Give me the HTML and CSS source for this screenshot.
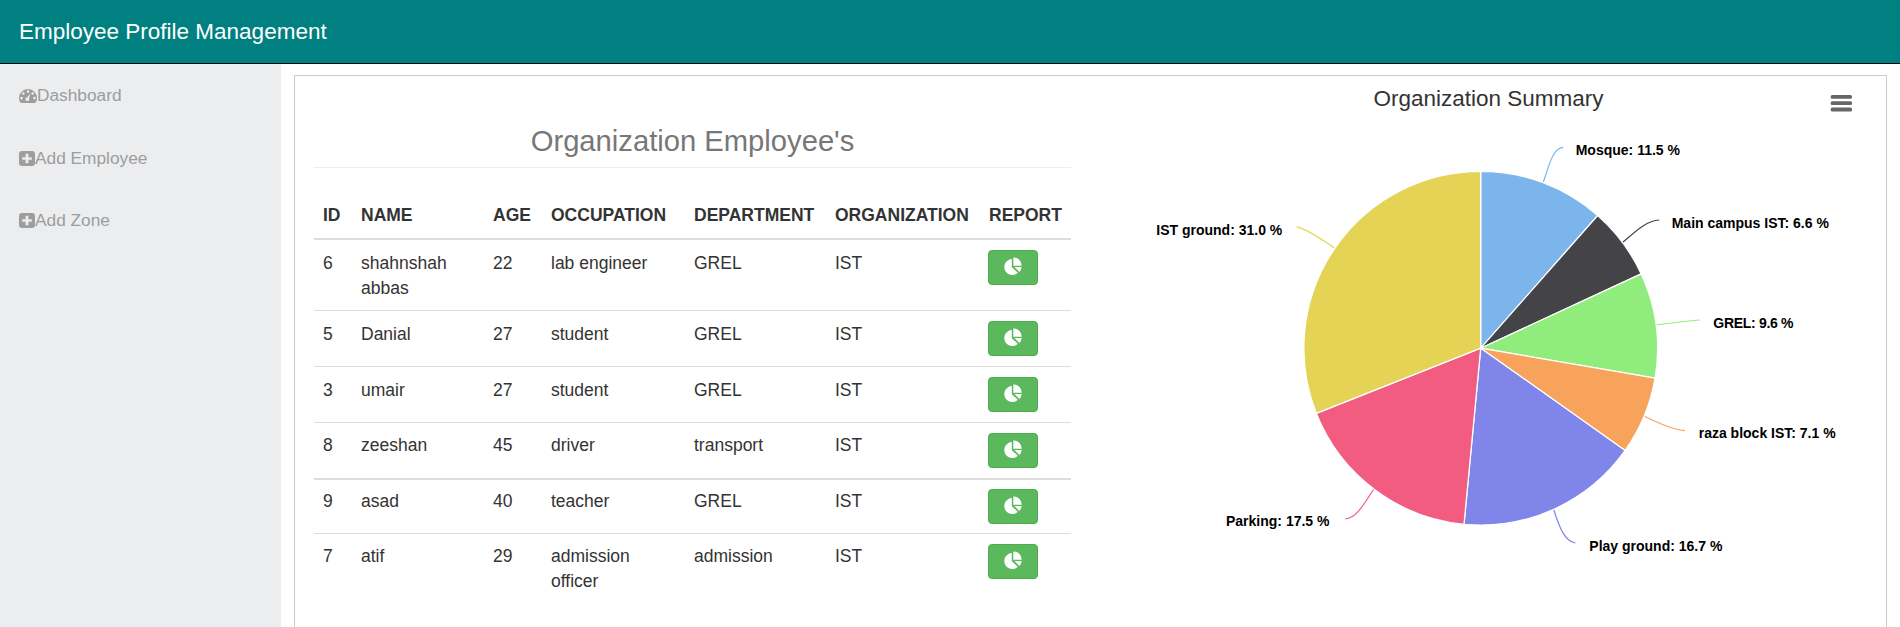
FILE: index.html
```html
<!DOCTYPE html>
<html lang="en">
<head>
    <meta charset="UTF-8">
    <meta name="viewport" content="width=device-width, initial-scale=1.0">
    <title>Employee Profile Management</title>
    <link rel="stylesheet" href="styles.css">
</head>
<body>
    <header class="topbar">
        <a class="brand" href="#">Employee Profile Management</a>
    </header>
    <div class="layout">
        <nav class="sidebar">
            <a class="side-link" href="#">
                <svg class="side-icon dash" viewBox="0 0 18 14"><path fill-rule="evenodd" d="M9 0a9 9 0 0 1 9 9c0 1.900-.5 3.400-1.300 4.300-.300.400-.8.700-1.300.7H2.600c-.5 0-1-.3-1.300-.7C.5 12.400 0 10.900 0 9a9 9 0 0 1 9-9zM9 1.300a1.300 1.300 0 1 0 0 2.600 1.300 1.300 0 0 0 0-2.600zM4.300 3.200a1.300 1.300 0 1 0 0 2.600 1.300 1.300 0 0 0 0-2.600zM13.700 3.200a1.300 1.300 0 1 0 0 2.600 1.300 1.300 0 0 0 0-2.600zM2.500 7.800a1.300 1.300 0 1 0 0 2.600 1.300 1.300 0 0 0 0-2.600zM15.500 7.800a1.300 1.300 0 1 0 0 2.600 1.300 1.300 0 0 0 0-2.600zM11.700 4.300L8.300 8.200a1.900 1.900 0 1 0 1.700 1z"/></svg>Dashboard
            </a>
            <a class="side-link" href="#">
                <svg class="side-icon plus" viewBox="0 0 16 15"><path fill-rule="evenodd" d="M3 0h10a3 3 0 0 1 3 3v9a3 3 0 0 1-3 3H3a3 3 0 0 1-3-3V3a3 3 0 0 1 3-3zM6.600 2.800v3.400H3.200v2.600h3.400v3.400h2.800V8.800h3.400V6.200H9.400V2.800z"/></svg>Add Employee
            </a>
            <a class="side-link" href="#">
                <svg class="side-icon plus" viewBox="0 0 16 15"><path fill-rule="evenodd" d="M3 0h10a3 3 0 0 1 3 3v9a3 3 0 0 1-3 3H3a3 3 0 0 1-3-3V3a3 3 0 0 1 3-3zM6.600 2.800v3.400H3.200v2.600h3.400v3.400h2.800V8.800h3.400V6.200H9.400V2.800z"/></svg>Add Zone
            </a>
        </nav>
        <main class="content">
            <div class="panel">
                <section class="employees">
                    <h2 class="employees-title">Organization Employee's</h2>
                    <table class="emp-table">
                        <colgroup>
                            <col class="col-id">
                            <col class="col-name">
                            <col class="col-age">
                            <col class="col-occ">
                            <col class="col-dep">
                            <col class="col-org">
                            <col class="col-rep">
                        </colgroup>
                        <thead>
                            <tr><th>ID</th><th>NAME</th><th>AGE</th><th>OCCUPATION</th><th>DEPARTMENT</th><th>ORGANIZATION</th><th>REPORT</th></tr>
                        </thead>
                        <tbody>
                            <tr class="row-low">
                                <td>6</td><td>shahnshah abbas</td><td>22</td><td>lab engineer</td><td>GREL</td><td>IST</td>
                                <td><button class="report-btn"><svg class="pie-icon" viewBox="0 0 18 18"><path d="M7.800 2A8 8 0 1 0 13.800 15.800L7.800 10.200z"/><path d="M9.300 .4A8.200 8.200 0 0 1 17.700 8.700H9.300z"/><path d="M10.400 10H17.700A8.200 8.200 0 0 1 15.300 14.900z"/></svg></button></td>
                            </tr>
                            <tr class="row-low">
                                <td>5</td><td>Danial</td><td>27</td><td>student</td><td>GREL</td><td>IST</td>
                                <td><button class="report-btn"><svg class="pie-icon" viewBox="0 0 18 18"><path d="M7.800 2A8 8 0 1 0 13.800 15.800L7.800 10.200z"/><path d="M9.300 .4A8.200 8.200 0 0 1 17.700 8.700H9.300z"/><path d="M10.400 10H17.700A8.200 8.200 0 0 1 15.300 14.900z"/></svg></button></td>
                            </tr>
                            <tr class="row-low">
                                <td>3</td><td>umair</td><td>27</td><td>student</td><td>GREL</td><td>IST</td>
                                <td><button class="report-btn"><svg class="pie-icon" viewBox="0 0 18 18"><path d="M7.800 2A8 8 0 1 0 13.800 15.800L7.800 10.200z"/><path d="M9.300 .4A8.200 8.200 0 0 1 17.700 8.700H9.300z"/><path d="M10.400 10H17.700A8.200 8.200 0 0 1 15.300 14.900z"/></svg></button></td>
                            </tr>
                            <tr>
                                <td>8</td><td>zeeshan</td><td>45</td><td>driver</td><td>transport</td><td>IST</td>
                                <td><button class="report-btn"><svg class="pie-icon" viewBox="0 0 18 18"><path d="M7.800 2A8 8 0 1 0 13.800 15.800L7.800 10.200z"/><path d="M9.300 .4A8.200 8.200 0 0 1 17.700 8.700H9.300z"/><path d="M10.400 10H17.700A8.200 8.200 0 0 1 15.300 14.900z"/></svg></button></td>
                            </tr>
                            <tr class="row-thick">
                                <td>9</td><td>asad</td><td>40</td><td>teacher</td><td>GREL</td><td>IST</td>
                                <td><button class="report-btn"><svg class="pie-icon" viewBox="0 0 18 18"><path d="M7.800 2A8 8 0 1 0 13.800 15.800L7.800 10.200z"/><path d="M9.300 .4A8.200 8.200 0 0 1 17.700 8.700H9.300z"/><path d="M10.400 10H17.700A8.200 8.200 0 0 1 15.300 14.900z"/></svg></button></td>
                            </tr>
                            <tr>
                                <td>7</td><td>atif</td><td>29</td><td>admission officer</td><td>admission</td><td>IST</td>
                                <td><button class="report-btn"><svg class="pie-icon" viewBox="0 0 18 18"><path d="M7.800 2A8 8 0 1 0 13.800 15.800L7.800 10.200z"/><path d="M9.300 .4A8.200 8.200 0 0 1 17.700 8.700H9.300z"/><path d="M10.400 10H17.700A8.200 8.200 0 0 1 15.300 14.900z"/></svg></button></td>
                            </tr>
                        </tbody>
                    </table>
                </section>
                <section class="summary">
                    <svg class="chart" viewBox="0 0 795 551">
                        <text class="chart-title" x="397.500" y="29.700">Organization Summary</text>
                        <g class="chart-menu">
                            <rect x="739.700" y="19" width="21.300" height="3.800" rx="1.500"/>
                            <rect x="739.700" y="25.300" width="21.300" height="3.800" rx="1.500"/>
                            <rect x="739.700" y="31.600" width="21.300" height="3.800" rx="1.500"/>
                        </g>
                        <g class="connectors">
                            <path stroke="#7cb5ec" d="M452.300 106C457 94 461 71.500 472.300 71.300"/>
                            <path stroke="#434348" d="M531.700 166.300C545 155 555 145 568.300 144"/>
                            <path stroke="#90ed7d" d="M565 249C580 247 595 245 609 244"/>
                            <path stroke="#f7a35c" d="M553 340C567 347 582 354 593.800 354.700"/>
                            <path stroke="#8085e9" d="M462.500 433C468 450 473 465 484.400 467"/>
                            <path stroke="#f15c80" d="M282.800 413C272 430 265 442 254.200 443"/>
                            <path stroke="#e4d354" d="M243 171.700C228 162 218 154 205.700 150.700"/>
                        </g>
                        <g class="slices" transform="translate(389.700 272.200) scale(1.005)">
                            <path fill="#7cb5ec" d="M0 0V-176A176 176 0 0 1 116.400 -132Z"/>
                            <path fill="#434348" d="M0 0L116.400 -132A176 176 0 0 1 159.700 -73.900Z"/>
                            <path fill="#90ed7d" d="M0 0L159.700 -73.900A176 176 0 0 1 173.500 29.700Z"/>
                            <path fill="#f7a35c" d="M0 0L173.500 29.700A176 176 0 0 1 143.700 101.700Z"/>
                            <path fill="#8085e9" d="M0 0L143.700 101.700A176 176 0 0 1 -16.600 175.200Z"/>
                            <path fill="#f15c80" d="M0 0L-16.600 175.200A176 176 0 0 1 -163.600 64.800Z"/>
                            <path fill="#e4d354" d="M0 0L-163.600 64.800A176 176 0 0 1 0 -176Z"/>
                        </g>
                        <g class="labels">
                            <text x="484.700" y="79">Mosque: 11.5 %</text>
                            <text x="580.700" y="152">Main campus IST: 6.6 %</text>
                            <text class="label-tight" x="622.300" y="252">GREL: 9.6 %</text>
                            <text x="607.700" y="361.700">raza block IST: 7.1 %</text>
                            <text x="498.300" y="474.700">Play ground: 16.7 %</text>
                            <text x="135" y="450">Parking: 17.5 %</text>
                            <text x="65.300" y="159">IST ground: 31.0 %</text>
                        </g>
                    </svg>
                </section>
            </div>
        </main>
    </div>
</body>
</html>
```

FILE: styles.css
```css
html, body {
    height: 100%;
    margin: 0;
    overflow: hidden;
}

body {
    font-family: "Liberation Sans", Arial, sans-serif;
    font-size: 17.5px;
    line-height: 25px;
    color: #333;
    background-color: #fff;
}

.topbar {
    height: 63px;
    background-color: #008080;
    border-bottom: 1px solid #080808;
    display: flex;
    align-items: center;
    padding-left: 19px;
}

.brand {
    color: #fff;
    font-size: 22.5px;
    text-decoration: none;
}

.layout {
    display: flex;
    height: 563px;
}

.sidebar {
    width: 281px;
    background-color: #ecedef;
    padding-left: 19px;
    box-sizing: border-box;
}

.side-link {
    display: flex;
    align-items: center;
    height: 62px;
    font-size: 17.3px;
    color: #9d9d9d;
    text-decoration: none;
}

.side-link:first-child {
    height: 63px;
}

.side-icon {
    fill: #9d9d9d;
    flex: none;
}

.dash {
    width: 18px;
    height: 14px;
}

.plus {
    width: 16px;
    height: 15px;
}

.content {
    flex: 1;
    padding: 11px 13px 0;
    overflow: hidden;
}

.panel {
    display: flex;
    height: 640px;
    border: 1px solid #ccc;
}

.employees {
    width: 757px;
    padding: 0 20px 0 19px;
}

.employees-title {
    margin: 49px 0 25px;
    padding-bottom: 10px;
    border-bottom: 1px solid #eee;
    font-size: 29.2px;
    line-height: 32px;
    font-weight: 500;
    color: #777;
    text-align: center;
}

.emp-table {
    width: 757px;
    border-collapse: collapse;
    table-layout: fixed;
}

.col-id { width: 39px; }
.col-name { width: 132px; }
.col-age { width: 58px; }
.col-occ { width: 143px; }
.col-dep { width: 141px; }
.col-org { width: 153px; }
.col-rep { width: 91px; }

.emp-table th {
    padding: 10px 8px;
    border-bottom: 2px solid #ddd;
    text-align: left;
}

.emp-table td {
    padding: 10px 8px;
    border-top: 1px solid #ddd;
    vertical-align: top;
}

.emp-table th:first-child,
.emp-table td:first-child,
.emp-table th:last-child {
    padding-left: 9px;
}

.emp-table tbody tr:first-child td {
    border-top: none;
}

.emp-table .row-low td:not(:last-child) {
    padding-top: 11px;
    padding-bottom: 9px;
}

.emp-table .row-thick td {
    border-top-width: 2px;
    padding-top: 9px;
    padding-bottom: 9px;
}

.report-btn {
    display: block;
    width: 50px;
    height: 35px;
    padding: 0 0 3px;
    background-color: #5cb85c;
    border: 1px solid #4cae4c;
    border-radius: 4px;
    cursor: pointer;
}

.pie-icon {
    display: block;
    width: 18px;
    height: 18px;
    margin: 0 auto;
    fill: #fff;
}

.summary {
    flex: 1;
}

.chart {
    display: block;
    width: 795px;
    height: 551px;
}

.chart-title {
    font-size: 22.5px;
    fill: #333;
    text-anchor: middle;
}

.chart-menu {
    fill: #666;
}

.connectors path {
    fill: none;
    stroke-width: 1.2;
}

.slices path {
    stroke: #fff;
    stroke-width: 1.25;
    stroke-linejoin: round;
}

.labels text {
    font-size: 14px;
    font-weight: bold;
    fill: #000;
}

.labels .label-tight {
    letter-spacing: -0.3px;
}
```
